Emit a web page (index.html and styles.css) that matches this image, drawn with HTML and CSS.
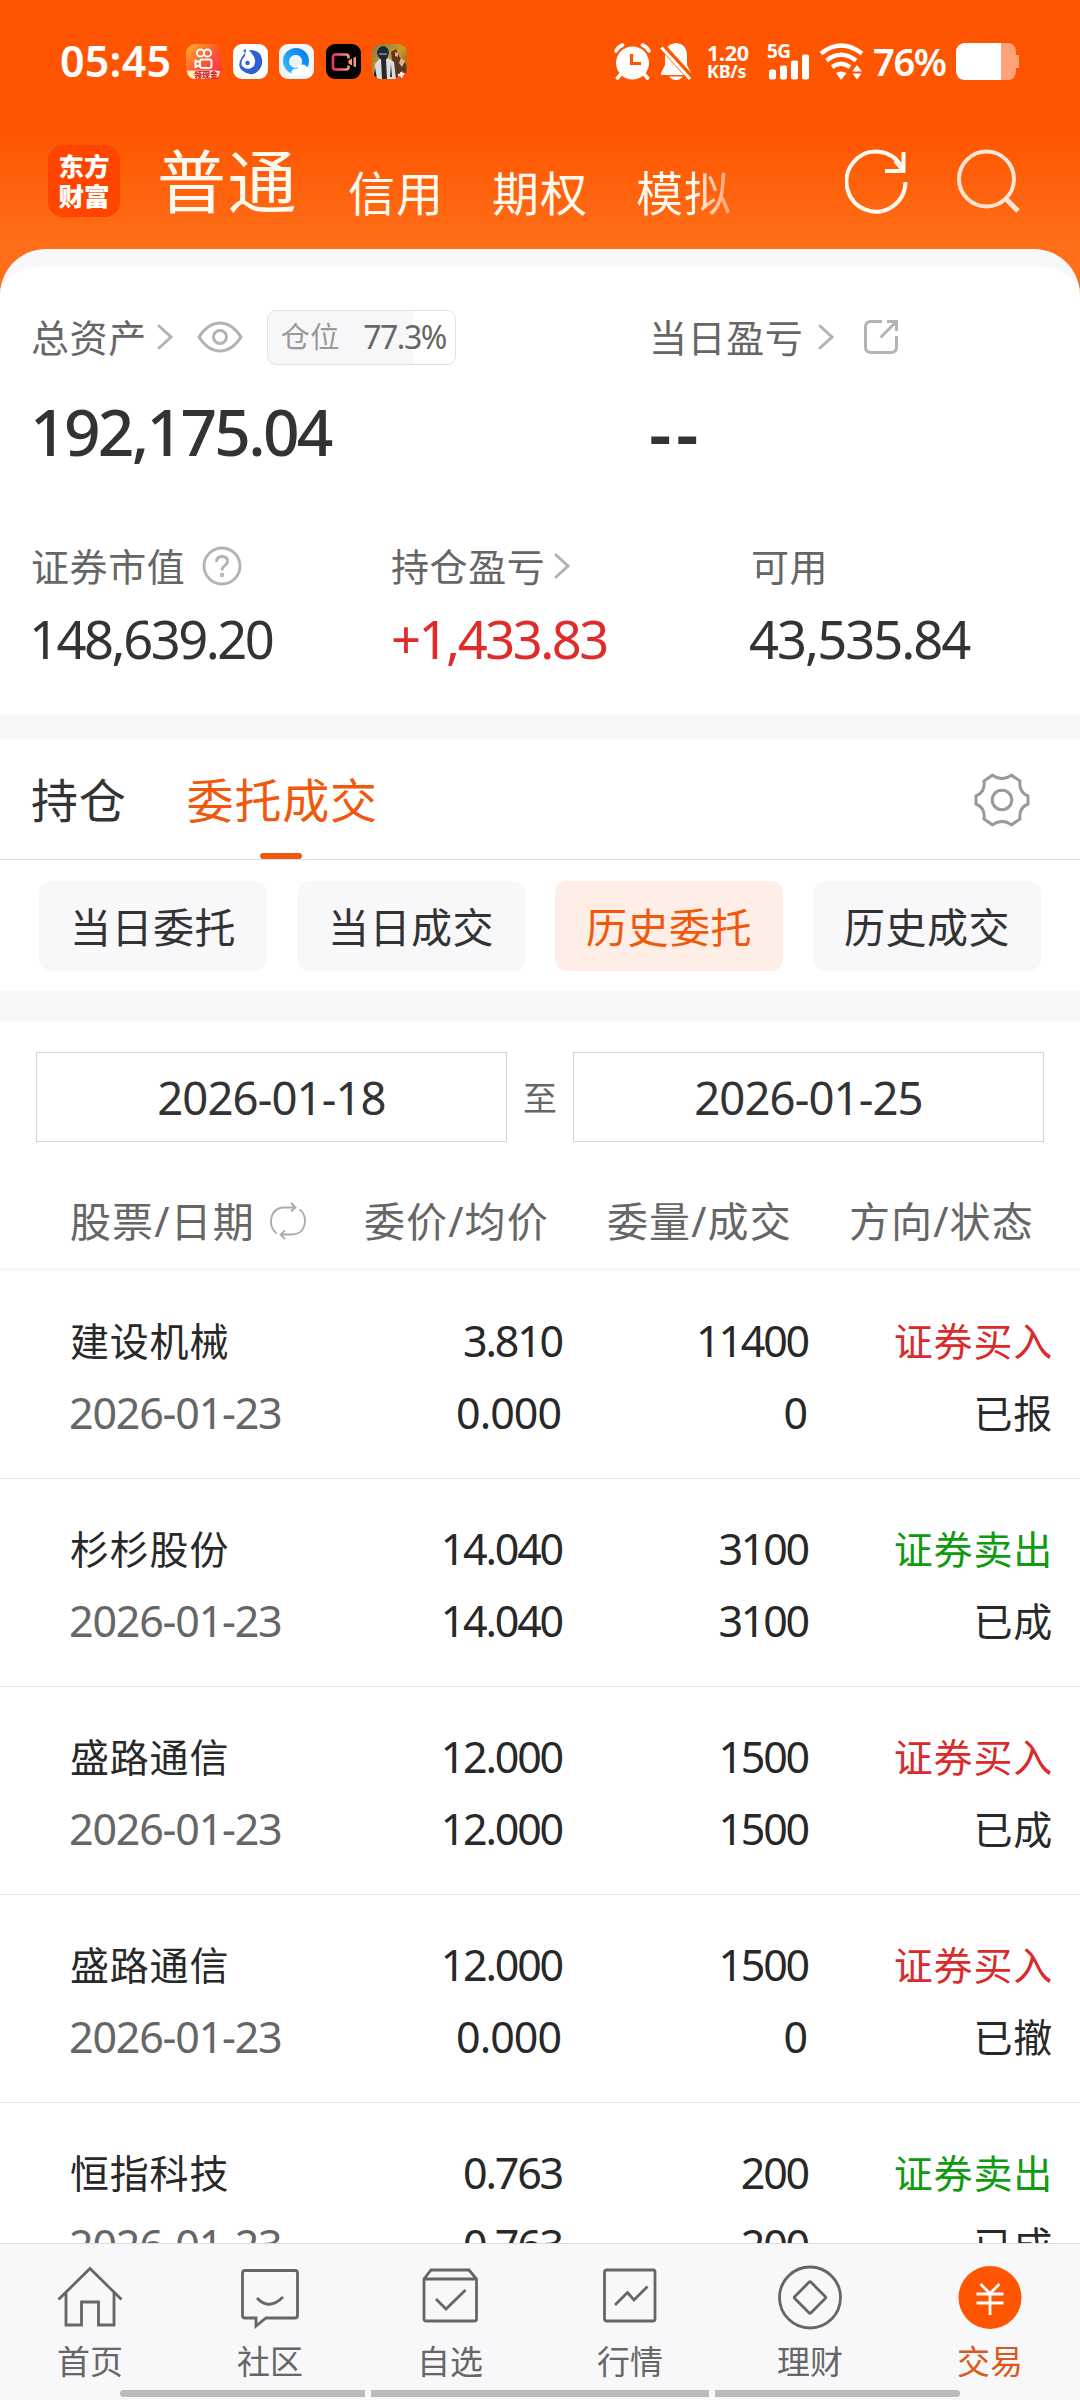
FILE: index.html
```html
<!DOCTYPE html>
<html lang="zh-CN">
<head>
<meta charset="utf-8">
<title>交易</title>
<link rel="stylesheet" href="styles.css">
</head>
<body>
<div class="app">
  <header class="hero">
    <div class="status">
      <span class="clock">05:45</span>
      <div class="apps">
        <svg width="35" height="35" viewBox="0 0 35 35">
          <defs><linearGradient id="ks" x1="0" y1="0" x2="1" y2="1"><stop offset="0" stop-color="#ffb02e"/><stop offset=".5" stop-color="#ff5a2e"/><stop offset="1" stop-color="#ff2850"/></linearGradient></defs>
          <rect width="35" height="35" rx="9" fill="url(#ks)"/>
          <path d="M1 26.500H28.500L34 27V28Q33 35 26 35H9Q2 35 1 27Z" fill="#ffe9c8"/>
          <g fill="none" stroke="#fff" stroke-width="2"><circle cx="14.500" cy="9" r="3.600"/><circle cx="21.500" cy="9" r="3.600"/><rect x="14" y="15.500" width="11.500" height="8.500" rx="2.200"/><path d="M14 18.500L9.500 16.500V23L14 21Z"/></g>
          <text x="8" y="33.500" class="tiny">领现金</text>
        </svg>
        <svg width="35" height="35" viewBox="0 0 35 35">
          <rect width="35" height="35" rx="9" fill="#fff"/>
          <path d="M10 6.500L12 9L9 13Q3 22 10 27Q17 33 24 28Q32 21 28 12Q26 6 16 6L19 10Q24 15 21 22Q15 28 9 22Q7 17 12 12L13 5Z" fill="#2f62d0"/>
          <circle cx="14.500" cy="18.500" r="5" fill="#fff"/><circle cx="14.500" cy="19" r="2.200" fill="#2f62d0"/>
        </svg>
        <svg width="35" height="35" viewBox="0 0 35 35">
          <defs><linearGradient id="qb" x1="1" y1="0" x2="0" y2="1"><stop offset="0" stop-color="#0a7df0"/><stop offset="1" stop-color="#35b8f8"/></linearGradient></defs>
          <rect width="35" height="35" rx="9" fill="#f2f5fa"/>
          <circle cx="17" cy="17" r="9.500" fill="none" stroke="url(#qb)" stroke-width="7"/>
          <circle cx="16.500" cy="17.500" r="6.500" fill="#edf3fb"/>
          <path d="M16 32Q12 31 12.500 27.500Q14 23.500 18 25Q20 19 26 21Q29 23 29 26Q32.500 28 30 31Q29 32 27 32Z" fill="#fff"/>
        </svg>
        <svg width="35" height="35" viewBox="0 0 35 35">
          <defs><linearGradient id="rec" x1="0" y1="0" x2="1" y2="0"><stop offset="0" stop-color="#e8386c"/><stop offset="1" stop-color="#f79a78"/></linearGradient></defs>
          <rect width="35" height="35" rx="9" fill="#000"/>
          <path d="M22.500 14.500V13Q22.500 10.500 20 10.500H9.500Q7 10.500 7 13V23Q7 25.500 9.500 25.500H20Q22.500 25.500 22.500 23V21.500" fill="none" stroke="url(#rec)" stroke-width="2.600"/>
          <path d="M22.500 16.500L26 14.500V21.500L22.500 19.500ZM27.500 13.500L30 13V23L27.500 22.500Z" fill="#f79a78"/>
        </svg>
        <svg width="35" height="35" viewBox="0 0 35 35">
          <defs><clipPath id="gc"><rect width="35" height="35" rx="9"/></clipPath><linearGradient id="gold" x1="0" y1="0" x2="1" y2="1"><stop offset="0" stop-color="#8a7648"/><stop offset=".5" stop-color="#c99a2e"/><stop offset="1" stop-color="#6e4422"/></linearGradient></defs>
          <g clip-path="url(#gc)">
            <rect width="35" height="35" fill="url(#gold)"/>
            <path d="M19 8L24 5L28 14L34 20V35H22Z" fill="#5a3520"/>
            <path d="M23 8L26 9L26 13L23 12ZM29 14L33 17L30 23L27 19Z" fill="#e2b083"/>
            <path d="M3 20L8 14H16L22 18L24 35H1Z" fill="#d9dde0"/>
            <path d="M9 15H14L15 35H10ZM3 23L5 35H1ZM19 20L20 33H18Z" fill="#26282c"/>
            <path d="M5 10Q5 3 11 2Q17 3 17 9L15 15H8Z" fill="#1c2a36"/>
            <path d="M7 9H15V11H7Z" fill="#61788a"/>
            <path d="M24 35L30 27L35 30V35Z" fill="#f4603c"/><path d="M26 31L32 30M29 28L30 34" stroke="#fff" stroke-width="1.800"/>
          </g>
        </svg>
      </div>
      <div class="sys">
        <svg width="37" height="37" viewBox="0 0 37 37">
          <circle cx="18.500" cy="20" r="16.500" fill="#fff"/>
          <path d="M2 8Q4 4 8.500 2M28.500 2Q33 4 35 8M7 31L3.500 35M30 31L33.500 35" stroke="#fff" stroke-width="3.600" fill="none" stroke-linecap="round"/>
          <path d="M17.500 11V20.500H27" stroke="#ff5500" stroke-width="3.200" fill="none"/>
        </svg>
        <svg class="bell" width="32" height="37" viewBox="0 0 32 37">
          <path d="M16 0Q27 1 27 13V22L31 30V32H1V30L5 22V13Q5 1 16 0ZM9 33.500H23Q20 37 16 37Q12 37 9 33.500Z" fill="#fff"/>
          <path d="M1 2L31 35" stroke="#ff5500" stroke-width="7"/>
          <path d="M1.500 4.500L30 36" stroke="#fff" stroke-width="3"/>
        </svg>
        <div class="speed"><b>1.20</b><i>KB/s</i></div>
        <div class="signal"><b>5G</b>
          <svg width="41" height="26" viewBox="0 0 41 26" fill="#fff"><rect y="15.500" width="7" height="10" rx="2"/><rect x="11" y="11.500" width="7" height="14" rx="2"/><rect x="22" y="6.500" width="7" height="19" rx="2"/><rect x="33" y="0.500" width="7" height="25" rx="2"/></svg>
        </div>
        <svg class="wifi" width="45" height="37" viewBox="0 0 45 37">
          <path d="M2 10.500Q22 -5.500 43 10.500M7.500 17.500Q22 6 37 17.500M13 24Q22 17.500 31 24" stroke="#fff" stroke-width="4.200" fill="none"/>
          <path d="M17 30Q22 27 27.500 30L22 37ZM38 22L43 28.500H33ZM33.500 30.500H42.500L38 36.500Z" fill="#fff"/>
        </svg>
        <span class="pct">76%</span>
        <svg width="64" height="37" viewBox="0 0 64 37">
          <path d="M45 0H53Q59 1 60 8V12H62Q63 12 63 14V23Q63 25 62 25H60V29Q59 36 53 37H45Z" fill="#ffa27a"/>
          <path d="M8 0H45V37H8Q1 36 0 29V8Q1 1 8 0Z" fill="#fff"/>
        </svg>
      </div>
    </div>
    <div class="topbar">
      <div class="logo"><span>东方</span><span>财富</span></div>
      <nav class="modes"><span class="mode-on">普通</span><span>信用</span><span>期权</span><span class="fade">模拟</span></nav>
      <svg class="reload" width="64" height="66" viewBox="0 0 64 66" fill="none" stroke="#fffaf0" stroke-width="4"><path d="M60.500 33A29.500 30 0 1 1 56.500 17.500"/><path d="M58.500 3V22H40M58 21L50 12"/></svg>
      <svg width="64" height="66" viewBox="0 0 64 66" fill="none" stroke="#ffe6d4" stroke-width="4"><circle cx="29.500" cy="30" r="27.500"/><path d="M48 49L61 62" stroke-width="5"/></svg>
    </div>
  </header>

  <main class="sheet">
    <section class="assets">
      <div class="totals">
        <div class="total">
          <div class="label">总资产
            <svg class="chev c1" width="16" height="26" viewBox="0 0 16 26"><path d="M2 2L14 13L2 24"/></svg>
            <svg class="eye" width="46" height="32" viewBox="0 0 46 32" fill="none" stroke="#b3b3b3" stroke-width="3"><path d="M2 16Q11 2 23 2T44 16Q35 30 23 30T2 16Z"/><circle cx="23" cy="16" r="6.500"/></svg>
            <span class="ratio"><em>仓位</em><span>77.3%</span></span>
          </div>
          <div class="big">192,175.04</div>
        </div>
        <div class="total">
          <div class="label">当日盈亏
            <svg class="chev c2" width="16" height="26" viewBox="0 0 16 26"><path d="M2 2L14 13L2 24"/></svg>
            <svg width="36" height="36" viewBox="0 0 36 36" fill="none" stroke="#b3b3b3" stroke-width="3"><path d="M19 2.500H8Q2.500 2.500 2.500 8V28Q2.500 33.500 8 33.500H28Q33.500 33.500 33.500 28V17"/><path d="M17.500 18.500L32.500 3.500M24 2.500H33.500V12"/></svg>
          </div>
          <div class="big dashes">--</div>
        </div>
      </div>
      <div class="stats">
        <div><div class="label">证券市值
          <svg class="help" width="40" height="40" viewBox="0 0 40 40" fill="none" stroke="#b3b3b3" stroke-width="2.800"><circle cx="20" cy="20" r="18"/><path d="M14.500 16Q14.500 10.500 20 10.500Q25.500 10.500 25.500 15.500Q25.500 18 22.500 19.800Q20 21.500 20 24.500"/><circle cx="20" cy="29" r=".8"/></svg></div>
          <div class="val">148,639.20</div></div>
        <div><div class="label">持仓盈亏
          <svg class="chev c3" width="16" height="26" viewBox="0 0 16 26"><path d="M2 2L14 13L2 24"/></svg></div>
          <div class="val up">+1,433.83</div></div>
        <div><div class="label">可用</div><div class="val last">43,535.84</div></div>
      </div>
    </section>

    <div class="tabs">
      <span>持仓</span><span class="tab-on">委托成交</span>
      <svg width="56" height="56" viewBox="0 0 56 56" fill="none" stroke="#999" stroke-width="3"><path d="M10 9L18.500 3.200Q28 10 37.500 3.200L46 9Q44.500 20 54 24V32Q44.500 36 46 47L37.500 52.800Q28 46 18.500 52.800L10 47Q11.500 36 2 32V24Q11.500 20 10 9Z"/><circle cx="28" cy="28" r="9.800"/></svg>
    </div>
    <div class="chips"><span>当日委托</span><span>当日成交</span><span class="chip-on">历史委托</span><span>历史成交</span></div>

    <div class="range"><span class="date">2026-01-18</span><span class="to">至</span><span class="date">2026-01-25</span></div>

    <div class="thead">
      <span class="h1">股票/日期
        <svg width="38" height="38" viewBox="0 0 38 38" fill="none" stroke="#aaa" stroke-width="1.800"><path d="M7.500 31.500Q1.500 26 2 19Q3 6 15 5.500H26M22 1L26.500 5.500L22 9.500M30.500 7.500Q36.500 12 36 19.500Q35 32 23 32.500H12M16 28.500L11.500 32.500L16 37"/></svg></span>
      <span class="h2">委价/均价</span><span class="h3">委量/成交</span><span class="h4">方向/状态</span>
    </div>

    <div class="list">
      <div class="row"><span class="name">建设机械</span><span class="num tight">3.810</span><span class="num tight">11400</span><span class="buy">证券买入</span><span class="day">2026-01-23</span><span class="num">0.000</span><span class="num">0</span><span class="state">已报</span></div>
      <div class="row"><span class="name">杉杉股份</span><span class="num tight">14.040</span><span class="num tight">3100</span><span class="sell">证券卖出</span><span class="day">2026-01-23</span><span class="num tight">14.040</span><span class="num tight">3100</span><span class="state">已成</span></div>
      <div class="row"><span class="name">盛路通信</span><span class="num tight">12.000</span><span class="num tight">1500</span><span class="buy">证券买入</span><span class="day">2026-01-23</span><span class="num tight">12.000</span><span class="num tight">1500</span><span class="state">已成</span></div>
      <div class="row"><span class="name">盛路通信</span><span class="num tight">12.000</span><span class="num tight">1500</span><span class="buy">证券买入</span><span class="day">2026-01-23</span><span class="num">0.000</span><span class="num">0</span><span class="state">已撤</span></div>
      <div class="row"><span class="name">恒指科技</span><span class="num tight">0.763</span><span class="num tight">200</span><span class="sell">证券卖出</span><span class="day">2026-01-23</span><span class="num tight">0.763</span><span class="num tight">200</span><span class="state">已成</span></div>
    </div>
  </main>

  <nav class="nav">
    <div class="items">
      <div><svg width="66" height="66" viewBox="0 0 66 66"><path d="M1.500 34.500L33 3.500L64.500 34.500M9 28V60H24.500V37H41.500V60H57V28"/></svg>首页</div>
      <div><svg width="66" height="66" viewBox="0 0 66 66"><path d="M8 5.500H58Q60.500 5.500 60.500 8V50.500Q60.500 53 58 53H29L19 61V53H8Q5.500 53 5.500 50.500V8Q5.500 5.500 8 5.500ZM20 33Q32 46 46 32"/></svg>社区</div>
      <div><svg width="66" height="66" viewBox="0 0 66 66"><path d="M14 5H52L59.500 14V54Q59.500 56 57.500 56H9Q7 56 7 54V14ZM7 14H59.500M19 34L29 44L48.500 25"/></svg>自选</div>
      <div><svg width="66" height="66" viewBox="0 0 66 66"><rect x="7.500" y="5" width="50.500" height="51" rx="2"/><path d="M18 40L30.500 27.500L37 35L50.500 21.500"/></svg>行情</div>
      <div><svg width="66" height="66" viewBox="0 0 66 66"><circle cx="33" cy="32.500" r="30.500"/><rect x="21.500" y="21" width="23" height="23" rx="1.500" transform="rotate(45 33 32.500)"/></svg>理财</div>
      <div class="here"><svg width="66" height="66" viewBox="0 0 66 66"><circle class="disc" cx="33" cy="32.500" r="31.500"/><path class="yen" d="M23.500 19L33 28.500L42.500 19M19.500 29H46.500M19.500 38H46.500M33 28V50"/></svg>交易</div>
    </div>
    <div class="bars"><i></i><i></i><i></i></div>
  </nav>
</div>
</body>
</html>
```
FILE: styles.css
```css
* { box-sizing: border-box; }
body { margin: 0; background: #fff; font-family: "Noto Sans", "Noto Sans CJK SC", sans-serif; color: #333; }
svg { display: block; flex: none; }
b, i, em { font-style: normal; }

.app { width: 1080px; height: 2400px; overflow: hidden; display: flex; flex-direction: column; background: linear-gradient(#f50 130px, #ff6f1a 249px, #ff6f1a 300px, #fff 300px); }
.hero { height: 249px; flex: none; color: #fff; }

.status { display: flex; align-items: center; height: 79px; padding: 43px 60px 0 60px; }
.clock { width: 126px; font-size: 43px; font-weight: 600; line-height: 34px; letter-spacing: .2px; }
.apps { display: flex; gap: 11.500px; }
.tiny { font-size: 8px; font-weight: 900; fill: #d3222b; }
.sys { display: flex; align-items: center; margin-left: auto; height: 36px; }
.bell { margin-left: 9px; }
.speed { margin-left: 15px; width: 44px; display: flex; flex-direction: column; white-space: nowrap; }
.speed b { font-size: 21.500px; font-weight: 700; line-height: 19px; letter-spacing: -0.300px; }
.speed i { font-size: 18px; font-weight: 700; line-height: 18px; letter-spacing: -0.300px; }
.signal { margin-left: 16px; width: 43px; height: 37px; position: relative; display: flex; align-items: flex-end; padding-left: 2px; }
.signal b { position: absolute; left: 0; top: 0; font-size: 19px; line-height: 16px; letter-spacing: -0.5px; }
.wifi { margin-left: 9px; }
.pct { margin-left: 9px; width: 83px; font-size: 38px; font-weight: 600; line-height: 36px; letter-spacing: -1.300px; white-space: nowrap; }

.topbar { display: flex; padding: 66px 57px 0 48px; }
.logo { width: 72px; height: 72px; border-radius: 15px; background: #ff4500; color: #fff; display: flex; flex-direction: column; align-items: center; justify-content: center; font-size: 25.500px; line-height: 30px; font-weight: 800; }
.modes { display: flex; align-items: flex-end; gap: 46px; margin-left: 37px; width: 688px; height: 79px; color: #fffaf0; font-size: 47px; line-height: 62px; }
.modes span { width: 98px; letter-spacing: 1px; white-space: nowrap; flex: none; }
.modes .mode-on { width: 145px; font-size: 69px; line-height: 86px; letter-spacing: 1.500px; }
.modes .fade { background: linear-gradient(90deg, #fffaf0 58%, rgba(255,250,240,.45) 95%); -webkit-background-clip: text; background-clip: text; color: transparent; }
.reload { margin-right: 48px; }
.topbar > svg { margin-top: 4px; }

.sheet { flex: 1; min-height: 0; display: flex; flex-direction: column; border-radius: 46px 46px 0 0; overflow: hidden; background: #fff; border-top: 17px solid #f8f8fb; }
.label { display: flex; align-items: center; height: 54px; font-size: 38px; letter-spacing: .6px; line-height: 52px; color: #666; white-space: nowrap; }
.assets { height: 449px; padding: 44px 0 0 31px; flex: none; }
.totals { display: grid; grid-template-columns: 618px 1fr; }
.big { margin: 28px 0 0 -1px; height: 83px; line-height: 80px; font-size: 64px; font-weight: 500; letter-spacing: -2.700px; }
.dashes { margin-left: 0; font-size: 70px; letter-spacing: 4.500px; font-weight: 600; }
.chev { fill: none; stroke: #b3b3b3; stroke-width: 3; stroke-linecap: round; }
.c1 { margin-left: 10px; }
.c2 { margin-left: 15px; margin-right: 29px; }
.c3 { margin-left: 9px; }
.eye { margin-left: 24px; }
.ratio { margin-left: 24px; width: 189px; height: 55px; border: 1px solid #e2e2e6; border-radius: 9px; background: linear-gradient(90deg, #f7f7fa 145px, #fff 145px); display: flex; justify-content: space-between; padding: 0 9px 0 13px; line-height: 51px; font-size: 32px; letter-spacing: -1.500px; }
.ratio em { font-size: 29px; color: #999; letter-spacing: .5px; }
.stats { display: grid; grid-template-columns: 360px 360px 1fr; margin-top: 64px; }
.val { margin: 18px 0 0 -2px; height: 56px; line-height: 56px; font-size: 52.500px; letter-spacing: -2.500px; }
.last { letter-spacing: -2px; }
.up { margin-left: 0; color: #e02b2b; }
.help { margin-left: 17px; }

.tabs { height: 145px; flex: none; border-top: 24px solid #f8f8fb; border-bottom: 1px solid #ddd; display: flex; padding: 0 50px 0 31px; gap: 60px; font-size: 47px; letter-spacing: .8px; line-height: 122px; }
.tabs svg { margin: 33px 0 0 auto; }
.tab-on { color: #f0580c; position: relative; }
.tab-on::after { content: ""; position: absolute; left: 50%; bottom: 0; width: 42px; height: 6px; margin-left: -22px; border-radius: 3px; background: #f0580c; }
.chips { height: 131px; flex: none; padding: 21px 39px 20px; display: grid; grid-template-columns: repeat(4, 228px); gap: 30px; }
.chips span { background: #f8f8fb; border-radius: 12px; text-align: center; font-size: 41px; line-height: 92px; height: 90px; letter-spacing: .5px; }
.chips .chip-on { background: #ffeee6; color: #f0580c; }

.range { height: 182px; flex: none; border-top: 31px solid #f6f8fa; padding: 30px 36px 0; display: flex; }
.date { width: 471px; height: 90px; border: 1px solid #d4d4d4; text-align: center; font-size: 45.500px; line-height: 89px; letter-spacing: -.9px; }
.to { width: 66px; text-align: center; color: #666; font-size: 34px; line-height: 92px; }
.thead { height: 98px; flex: none; border-bottom: 3px solid #f7f7f7; display: grid; grid-template-columns: 294px 243px 242px 1fr; padding-left: 70px; font-size: 41px; line-height: 96px; color: #666; white-space: nowrap; letter-spacing: 1.100px; }
.h1 { display: flex; align-items: center; gap: 14px; }
.list { flex: 1; min-height: 0; overflow: hidden; color: #282828; }
.row { height: 208px; border-bottom: 1px solid #eaeaea; padding: 34px 27px 0 70px; display: grid; grid-template-columns: 261px 230px 246px 1fr; grid-auto-rows: 72px; line-height: 71px; font-size: 39px; letter-spacing: .8px; }
.num { text-align: right; font-size: 43px; letter-spacing: -1px; line-height: 71px; }
.tight { letter-spacing: -2.200px; margin-right: -1px; }
.day { font-size: 43px; letter-spacing: -1.200px; line-height: 71px; color: #666; margin-left: -1px; }
.buy, .sell, .state { text-align: right; }
.buy { color: #d92b2b; }
.sell { color: #109a10; }

.nav { height: 157px; flex: none; background: #f8f8fb; border-top: 1px solid #ddd; }
.items { display: grid; grid-template-columns: repeat(6, 180px); height: 146px; padding-top: 21px; }
.items div { display: flex; flex-direction: column; align-items: center; font-size: 33px; line-height: 62px; color: #666; }
.items svg { fill: none; stroke: #666; stroke-width: 2.800; }
.items .here { color: #d9591a; }
.items .disc { fill: #f50; stroke: none; }
.items .yen { stroke: #fff; }
.bars { display: flex; gap: 6px; padding-left: 120px; }
.bars i { width: 245px; height: 7px; background: #bbb; border-radius: 4px 0 0 4px; }
.bars i:nth-child(2) { width: 338px; border-radius: 0; }
.bars i:nth-child(3) { border-radius: 0 4px 4px 0; }
```
